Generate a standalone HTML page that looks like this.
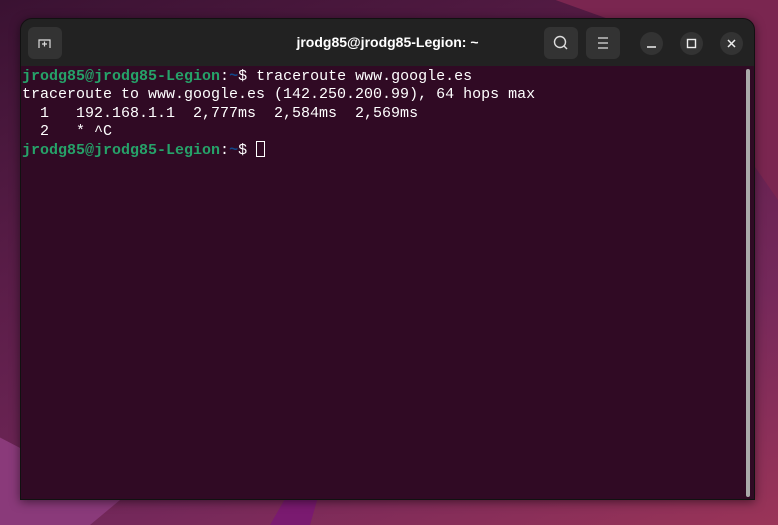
<!DOCTYPE html>
<html><head><style>
html,body{margin:0;padding:0;width:778px;height:525px;overflow:hidden;}
body{position:relative;font-family:"Liberation Sans",sans-serif;}
.bg1{position:absolute;left:0;top:0;width:778px;height:525px;background:linear-gradient(160deg,#3a1232 0%,#5a1d48 35%,#74285a 70%,#9a3458 100%);}
.p1{position:absolute;left:500px;top:0;width:278px;height:200px;background:#7a2650;clip-path:polygon(20% 0,100% 0,100% 100%,60% 20%);}
.p2{position:absolute;left:0;top:400px;width:300px;height:125px;background:#8a3a7a;clip-path:polygon(0 30%,40% 80%,30% 100%,0 100%);}
.p3{position:absolute;left:260px;top:490px;width:100px;height:35px;background:#7a1a70;clip-path:polygon(30% 0,60% 0,50% 100%,10% 100%);}
.win{position:absolute;left:20px;top:18px;width:735px;height:482px;background:#300a24;border-radius:12px 12px 0 0;overflow:hidden;box-shadow:0 2px 10px rgba(0,0,0,.5);border:1px solid #111;box-sizing:border-box;}
.hdr{height:47px;background:#222222;position:relative;}
.title{position:absolute;left:0;right:0;top:15px;text-align:center;color:#fff;font-weight:bold;font-size:14px;}
.btn{position:absolute;top:8px;width:34px;height:32px;border-radius:6px;background:#333;}
.circ{position:absolute;top:13px;width:23px;height:23px;border-radius:50%;background:#333;}
.term{position:absolute;left:1px;top:49px;font-family:"Liberation Mono",monospace;font-size:15px;line-height:18.3px;color:#fff;white-space:pre;}
.g{color:#26a269;font-weight:bold;}
.b{color:#12488b;font-weight:bold;}
.sb{position:absolute;left:725px;top:50px;width:4px;height:428px;background:#aaa;border-radius:2px;}
.cur{display:inline-block;width:9px;height:16px;border:1px solid #fff;box-sizing:border-box;vertical-align:-3px;}
</style></head><body>
<div class="bg1"></div><div class="p1"></div><div class="p2"></div><div class="p3"></div>
<div class="win">
<div class="hdr">
<div class="btn" style="left:7px;"><svg width="34" height="32"><path d="M11 21V13H22V21M16.5 14.5V19.5M14 17H19" stroke="#ddd" stroke-width="1.2" fill="none"/></svg></div>
<div class="title">jrodg85@jrodg85-Legion: ~</div>
<div class="btn" style="left:523px;"><svg width="34" height="32"><circle cx="16" cy="15" r="5.5" stroke="#ddd" stroke-width="1.4" fill="none"/><path d="M20 19L23 22" stroke="#ddd" stroke-width="1.4"/></svg></div>
<div class="btn" style="left:565px;"><svg width="34" height="32"><path d="M12 11H22M12 16H22M12 21H22" stroke="#ddd" stroke-width="1.3"/></svg></div>
<div class="circ" style="left:619px;"><svg width="23" height="23"><path d="M7 15H16" stroke="#eee" stroke-width="1.5"/></svg></div>
<div class="circ" style="left:659px;"><svg width="23" height="23"><rect x="7.5" y="7.5" width="8" height="8" stroke="#eee" stroke-width="1.4" fill="none"/></svg></div>
<div class="circ" style="left:699px;"><svg width="23" height="23"><path d="M8 8L15 15M15 8L8 15" stroke="#eee" stroke-width="1.5"/></svg></div>
</div>
<div class="term"><span class="g">jrodg85@jrodg85-Legion</span>:<span class="b">~</span>$ traceroute www.google.es
traceroute to www.google.es (142.250.200.99), 64 hops max
  1   192.168.1.1  2,777ms  2,584ms  2,569ms 
  2   * ^C
<span class="g">jrodg85@jrodg85-Legion</span>:<span class="b">~</span>$ <span class="cur"></span></div>
<div class="sb"></div>
</div>
</body></html>
